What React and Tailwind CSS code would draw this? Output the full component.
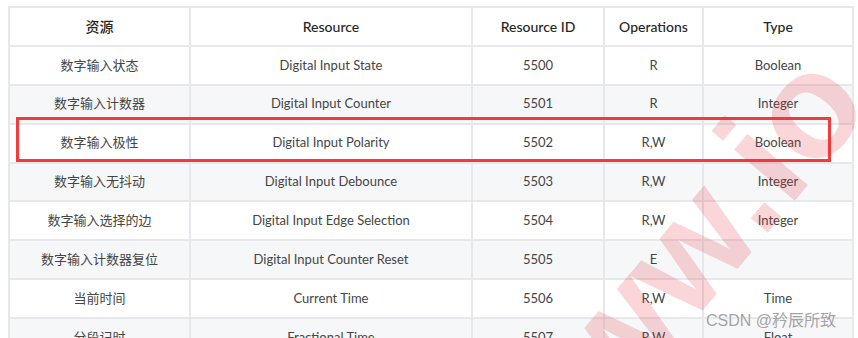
import React from 'react';

const rows = [
  ['数字输入状态', 'Digital Input State', '5500', 'R', 'Boolean'],
  ['数字输入计数器', 'Digital Input Counter', '5501', 'R', 'Integer'],
  ['数字输入极性', 'Digital Input Polarity', '5502', 'R,W', 'Boolean'],
  ['数字输入无抖动', 'Digital Input Debounce', '5503', 'R,W', 'Integer'],
  ['数字输入选择的边', 'Digital Input Edge Selection', '5504', 'R,W', 'Integer'],
  ['数字输入计数器复位', 'Digital Input Counter Reset', '5505', 'E', ''],
  ['当前时间', 'Current Time', '5506', 'R,W', 'Time'],
  ['分段记时', 'Fractional Time', '5507', 'R,W', 'Float'],
];

const headers = ['资源', 'Resource', 'Resource ID', 'Operations', 'Type'];

function App() {
  return (
    <div className="relative w-[858px] h-[338px] overflow-hidden bg-white font-['Lato','Noto_Sans_CJK_SC',sans-serif]">
      <div className="pt-[6px] pl-[8px]">
        <table className="table-fixed border-collapse w-[844px] text-[13px] text-[#454545]">
          <colgroup>
            <col className="w-[181px]" />
            <col className="w-[282px]" />
            <col className="w-[132px]" />
            <col className="w-[99px]" />
            <col className="w-[150px]" />
          </colgroup>
          <thead>
            <tr className="bg-white">
              {headers.map((h) => (
                <th key={h} className="h-[38.9px] border-2 border-[#e6e8eb] text-center font-medium text-[14px] text-[#262626]">
                  {h}
                </th>
              ))}
            </tr>
          </thead>
          <tbody>
            {rows.map((r, i) => (
              <tr key={r[2]} className={i % 2 === 1 ? 'bg-[#f6f7f9]' : 'bg-white'}>
                {r.map((c, j) => (
                  <td key={j} className="h-[38.9px] border-2 border-[#e6e8eb] text-center">
                    {c}
                  </td>
                ))}
              </tr>
            ))}
          </tbody>
        </table>
      </div>

      {/* highlight around the polarity row */}
      <div className="absolute left-[16px] top-[117px] w-[815px] h-[45px] border-[3px] border-[#f23b3b] pointer-events-none" />

      {/* diagonal site watermark */}
      <div className="absolute left-[500px] top-[396px] origin-left -rotate-[50deg] whitespace-nowrap text-[150px] leading-none font-bold font-['Liberation_Sans',sans-serif] text-[#e8323c]/20 pointer-events-none">
        www.io
      </div>

      <div className="absolute left-[706px] top-[309px] text-[16px] text-[#a3a3a3] font-['Liberation_Sans','Noto_Sans_CJK_SC',sans-serif] [text-shadow:0_0_2px_white] pointer-events-none">
        CSDN @矜辰所致
      </div>
    </div>
  );
}

export default App;
